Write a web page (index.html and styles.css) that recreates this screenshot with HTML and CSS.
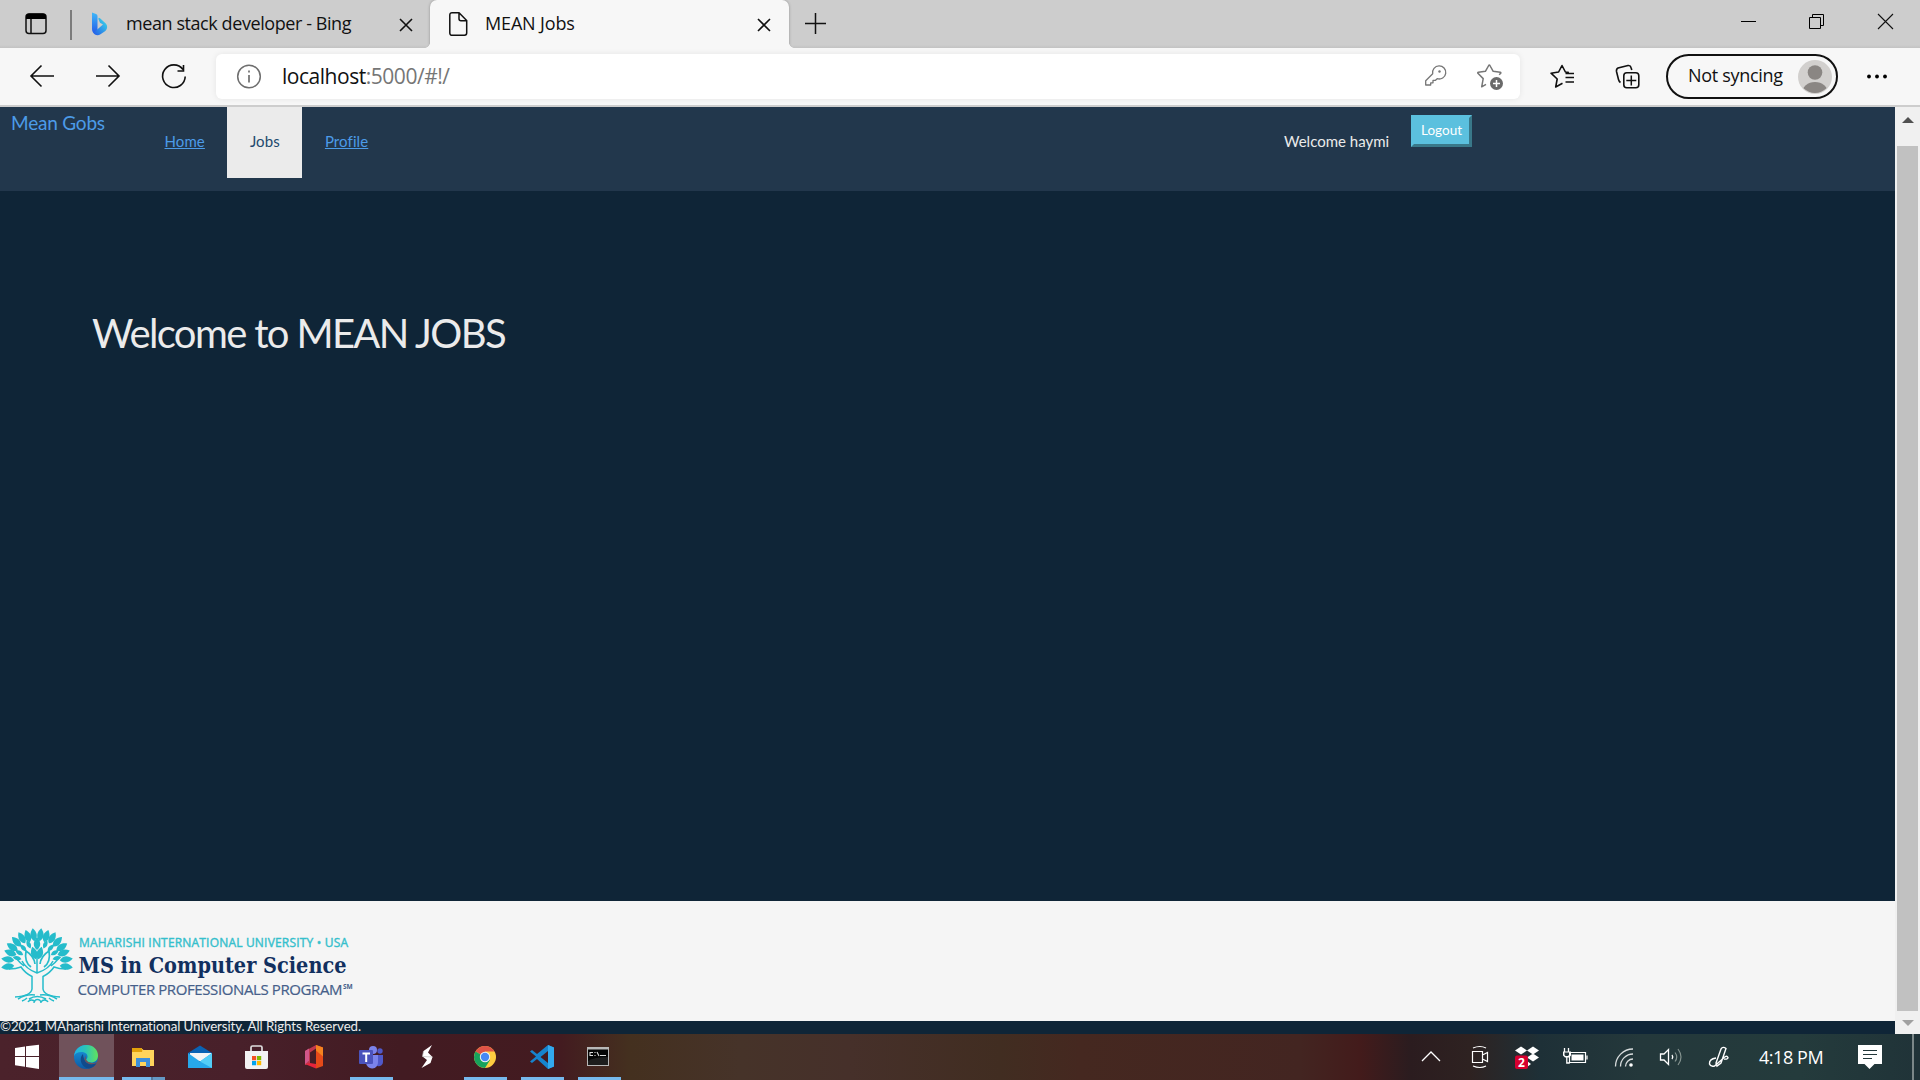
FILE: index.html
```html
<!DOCTYPE html>
<html lang="en">
<head>
<meta charset="utf-8">
<title>MEAN Jobs</title>
<link rel="stylesheet" href="styles.css">
</head>
<body>
<div class="tabstrip">
  <svg class="ic" width="70" height="48" viewBox="0 0 70 48"><rect x="26" y="14" width="20" height="19.500" rx="3" fill="none" stroke="#111" stroke-width="1.500"/><path d="M26 19v-2a3.500 3.500 0 0 1 3.500-3.500h13a3.500 3.500 0 0 1 3.500 3.500v2z" fill="#000"/><path d="M31 19v14.500" stroke="#111" stroke-width="1.500"/></svg>
  <div class="strip-sep"></div>
  <div class="tab">
    <svg class="ic" width="54" height="48" viewBox="72 0 54 48"><defs><linearGradient id="b1" x2="0" y2="1"><stop stop-color="#3fb8f8"/><stop offset="1" stop-color="#2458e8"/></linearGradient><linearGradient id="b2" x1="0" y1="1" x2="1" y2="0"><stop stop-color="#2458e8"/><stop offset="1" stop-color="#3be0e8"/></linearGradient></defs><path d="M92 12.500l4 1.500q1.500.6 1.500 2v14.500l-2 3.500q-3.500-1-3.500-5z" fill="url(#b1)"/><path d="M93 32c1.500 3.500 5 4 7.500 2.200l4.500-3c2.500-2 3-5.500.5-8l-5.500-5q-2-1-1.500 1l1.500 3.500 3 1.800-7.500 6.500q-2 1.500-2.500 1z" fill="url(#b2)"/></svg>
    <span class="tab-title">mean stack developer - Bing</span>
    <svg class="ic tab-close" width="54" height="48" viewBox="376 0 54 48"><path d="M400 19l12 12M412 19l-12 12" stroke="#111" stroke-width="1.600"/></svg>
  </div>
  <div class="tab active">
    <svg class="ic" width="55" height="48" viewBox="430 0 55 48"><path d="M459 12.700h-7a2.200 2.200 0 0 0-2.200 2.200v18.200a2.200 2.200 0 0 0 2.200 2.200h12.500a2.200 2.200 0 0 0 2.200-2.200v-12.500zM459 12.700v6a2 2 0 0 0 2 2h5.700" fill="none" stroke="#111" stroke-width="1.500"/></svg>
    <span class="tab-title">MEAN Jobs</span>
    <svg class="ic tab-close" width="50" height="48" viewBox="739 0 50 48"><path d="M758 19l12 12M770 19l-12 12" stroke="#111" stroke-width="1.600"/></svg>
  </div>
  <svg class="ic" width="52" height="48" viewBox="789 0 52 48"><path d="M805 23.500h21M815.500 13v21" stroke="#111" stroke-width="1.500"/></svg>
  <svg class="ic window-controls" width="206" height="48" viewBox="1714 0 206 48"><path d="M1741 21.500h15M1809.500 17.500h11v11h-11zM1812.500 17v-2.500h11v11h-2.500" fill="none" stroke="#000"/><path d="M1878 14l15 15M1893 14l-15 15" stroke="#111" stroke-width="1.100"/></svg>
</div>

<div class="toolbar">
  <svg class="ic" width="66" height="57" viewBox="9 48 66 57"><path d="M54 76H31M41.500 65.500L31 76l10.500 10.500" fill="none" stroke="#111" stroke-width="1.600"/></svg>
  <svg class="ic" width="66" height="57" viewBox="75 48 66 57"><path d="M96 76h23M108.500 65.500L119 76l-10.500 10.500" fill="none" stroke="#111" stroke-width="1.600"/></svg>
  <svg class="ic" width="66" height="57" viewBox="141 48 66 57"><path d="M185.200 76.500A11.300 11.300 0 1 1 183 69.500M183.500 65v6h-6" fill="none" stroke="#111" stroke-width="1.600"/></svg>
  <div class="address">
    <svg class="ic" width="66" height="45" viewBox="216 54 66 45"><circle cx="249" cy="76.500" r="11.300" fill="none" stroke="#6e6e6e" stroke-width="1.500"/><path d="M249 75v7.500M249 70.500v2" stroke="#6e6e6e" stroke-width="1.700"/></svg>
    <span class="url">localhost<span class="url-rest">:5000/#!/</span></span>
    <svg class="ic push" width="55" height="45" viewBox="1409 54 55 45"><path d="M1426.700 85.500v-4.300l7-7a6.600 6.600 0 1 1 4.500 5l-1.700 1.600h-2.500v2.500h-2.300v2.200h-5z" transform="translate(0 -.5)" fill="none" stroke="#767676" stroke-width="1.300" stroke-linejoin="round"/><circle cx="1440.500" cy="71.500" r="1.200" fill="#767676"/></svg>
    <svg class="ic" width="55" height="45" viewBox="1463 54 55 45"><path d="M1486 84.300l-4.300 2.500 1.500-8.200-5.300-5.300q-.5-.8.500-1l7-1 3.300-5.800q.6-1 1.200 0l3.300 5.800 7 1q1 .2.500 1l-1.500 1.500" fill="none" stroke="#767676" stroke-width="1.500" stroke-linejoin="round"/><circle cx="1496.500" cy="83.500" r="6.500" fill="#6a6a6a"/><path d="M1493 83.500h7M1496.500 80v7" stroke="#fff" stroke-width="1.500"/></svg>
  </div>
  <svg class="ic" width="66" height="57" viewBox="1529 48 66 57"><path d="M1562.500 83.300l-6.800 3.700 1.500-8-6.200-5.800 7.600-1.200 3.400-6.500 3.400 6.500 3.500.6M1565.500 73.500h8.500M1565.500 77.500h8.500M1565.500 82h8.500" fill="none" stroke="#111" stroke-width="1.600" stroke-linejoin="round"/></svg>
  <svg class="ic" width="66" height="57" viewBox="1595 48 66 57"><path d="M1620.500 82.500q-1.500-1-2-3l-2-8q-.4-2.500 1.500-3.500l10-2.500q2.500-.3 3 2l.8 2.500" fill="none" stroke="#111" stroke-width="1.600"/><rect x="1623.800" y="72.800" width="15" height="15" rx="3" fill="none" stroke="#111" stroke-width="1.600"/><path d="M1631.300 75.500v10M1626.300 80.500h10" stroke="#111" stroke-width="1.500"/></svg>
  <div class="profile">
    <span class="profile-label">Not syncing</span>
    <svg class="ic" width="34" height="34" viewBox="0 0 34 34"><defs><clipPath id="av"><circle cx="17" cy="17" r="16"/></clipPath></defs><circle cx="17" cy="17" r="17" fill="#d2d0ce"/><circle cx="17" cy="12.500" r="7.300" fill="#8a8683"/><ellipse cx="17" cy="33" rx="13" ry="11" fill="#8a8683" clip-path="url(#av)"/></svg>
  </div>
  <svg class="ic" width="66" height="57" viewBox="1845 48 66 57"><circle cx="1870" cy="76.500" r="1.900"/><circle cx="1878" cy="76.500" r="1.900"/><circle cx="1886" cy="76.500" r="1.900"/></svg>
</div>

<div class="viewport">
  <div class="page">
    <nav class="navbar">
      <a class="brand">Mean Gobs</a>
      <div class="menu"><a class="link">Home</a><a class="link current">Jobs</a><a class="link">Profile</a></div>
      <span class="greeting">Welcome haymi</span>
      <button class="logout">Logout</button>
    </nav>
    <main class="main"><h1 class="headline">Welcome to MEAN JOBS</h1></main>
    <footer class="footer">
      <svg class="ic" width="370" height="120" viewBox="0 901 370 120">
        <defs>
          <path id="lf" d="M0 0C-5-4-3.500-9 0-13C3.500-9 5-4 0 0z"/>
          <path id="sm" d="M0 0C-3-3-2.500-6 0-9C2.500-6 3-3 0 0z"/>
        </defs>
        <g transform="translate(0 922)" fill="#25bccb">
          <g transform="translate(37 41)">
            <use href="#lf" transform="rotate(-97) translate(0 -23)"/><use href="#lf" transform="rotate(-83) translate(0 -23)"/><use href="#lf" transform="rotate(-69) translate(0 -22)"/><use href="#lf" transform="rotate(-57) translate(0 -23)"/><use href="#lf" transform="rotate(-44) translate(0 -23)"/><use href="#lf" transform="rotate(-31) translate(0 -23)"/><use href="#lf" transform="rotate(-19) translate(0 -22)"/><use href="#lf" transform="rotate(-7) translate(0 -22)"/><use href="#lf" transform="rotate(7) translate(0 -22)"/><use href="#lf" transform="rotate(19) translate(0 -22)"/><use href="#lf" transform="rotate(31) translate(0 -23)"/><use href="#lf" transform="rotate(44) translate(0 -23)"/><use href="#lf" transform="rotate(57) translate(0 -23)"/><use href="#lf" transform="rotate(69) translate(0 -22)"/><use href="#lf" transform="rotate(83) translate(0 -23)"/><use href="#lf" transform="rotate(97) translate(0 -23)"/>
            <use href="#sm" transform="rotate(-76) translate(0 -16)"/><use href="#sm" transform="rotate(-60) translate(0 -16)"/><use href="#sm" transform="rotate(-42) translate(0 -16)"/><use href="#sm" transform="rotate(-24) translate(0 -16)"/><use href="#lf" transform="rotate(0) translate(0 -13)"/><use href="#sm" transform="rotate(24) translate(0 -16)"/><use href="#sm" transform="rotate(42) translate(0 -16)"/><use href="#sm" transform="rotate(60) translate(0 -16)"/><use href="#sm" transform="rotate(76) translate(0 -16)"/>
            <use href="#lf" transform="rotate(-16) translate(0 -4)"/><use href="#lf" transform="rotate(16) translate(0 -4)"/>
          </g>
          <g fill="none" stroke="#25bccb" stroke-width="1.500">
            <path d="M9 47q7 0 12-2 4 6 11 9.500V67q-1 7-17 8M66 47q-7 0-12-2-4 6-11 9.500V67q1 7 17 8"/>
            <path d="M22 39q4 8 15 12 12-4 16-12M37 35v16M16 36q4 5 8 8M59 36q-4 5-8 8"/>
            <path d="M31 45q-7-5-5-16 8 5 9 13M44 45q7-5 5-16-8 5-9 13" stroke-width="1.700"/>
            <path d="M18 77q8-5 17-4M57 77q-8-5-17-4M28 80a4 4 0 0 1 7 0M34 81a3.500 3.500 0 0 1 7 0M41 80a4 4 0 0 1 7 0M29 77q8-5 17 0M22 79q3-1 5-3M54 79q-3-1-5-3"/>
          </g>
        </g>
        <text class="mark-top" x="79" y="947" textLength="269">MAHARISHI INTERNATIONAL UNIVERSITY • USA</text>
        <text class="mark-mid" x="78.500" y="972.500" textLength="268" lengthAdjust="spacingAndGlyphs">MS in Computer Science</text>
        <text class="mark-bottom" x="77.500" y="994.500" textLength="265">COMPUTER PROFESSIONALS PROGRAM</text>
        <text class="mark-sm" x="343" y="989">SM</text>
      </svg>
    </footer>
    <p class="copyright">©2021 MAharishi International University. All Rights Reserved.</p>
  </div>
  <div class="scrollbar">
    <div class="arrow-up"></div><div class="thumb"></div><div class="arrow-down"></div>
  </div>
</div>

<div class="taskbar">
  <svg class="task" width="58" height="46" viewBox="0 1034 58 46"><path d="M15 1048l10-1.500v9.500h-10zM26 1046.300l13-1.500v11.200h-13zM15 1057h10v9.700l-10-1.500zM26 1057h13v12l-13-2z" fill="#fff"/></svg>
  <div class="task-slot focused"><svg class="task" width="57" height="46" viewBox="58 1034 57 46"><defs><linearGradient id="e1" x2="1"><stop stop-color="#1fb0e6"/><stop offset=".5" stop-color="#2cc6b6"/><stop offset="1" stop-color="#63e35a"/></linearGradient><linearGradient id="e2" x2="0" y2="1"><stop stop-color="#1b9ce0"/><stop offset="1" stop-color="#0c59a4"/></linearGradient></defs><circle cx="86" cy="1057" r="12" fill="url(#e2)"/><path d="M74 1056c1-7 6-11 12.500-11 7 0 11.500 5 11.500 10.500 0 4.500-3 7-7 7-3 0-5-1-5-2.500 0-1 1.500-1.500 1.500-3.500 0-3-3-4.500-6-4.500-3.500 0-6.500 1.500-7.500 4z" fill="url(#e1)"/><path d="M83 1054c-5 5-1 14 6 14.500 3.500-.5 6-2.500 7.500-5.500-6 3-13 .5-13.500-9z" fill="#114a8b"/><path d="M86 1055.500c-1.500 5 3 8 8 7.600q2-.3 4.500-1.800l-2 1.700c-6 3-12 .5-12-5z" fill="#70525b"/></svg></div>
  <div class="task-slot running split"><svg class="task" width="57" height="46" viewBox="115 1034 57 46"><path d="M132 1048h9l2 2h-11z" fill="#e09c00"/><path d="M132 1048h9l2.500 2h10.500v16h-22z" fill="#ffd45c"/><path d="M132 1048h9q2 1 1 4h-10z" fill="#e3a10a"/><path d="M136 1058h14v9h-4v-5h-6v5h-4z" fill="#3d8fdb"/></svg></div>
  <svg class="task" width="57" height="46" viewBox="172 1034 57 46"><path d="M188 1053l12-7.500 12 7.500v5h-24z" fill="#0a63b4"/><path d="M190 1053h21v8h-21z" fill="#f5f5f5"/><path d="M188 1053l12 8.500 12-8.500v15h-24z" fill="#27a8ea"/><path d="M212 1053v15l-12-6.500z" fill="#53cdf6"/></svg>
  <svg class="task" width="57" height="46" viewBox="229 1034 57 46"><path d="M251 1052v-4.500q0-1.500 1.500-1.500h8q1.500 0 1.500 1.500v4.500" fill="none" stroke="#ddd" stroke-width="1.700"/><path d="M245 1051h23v16q0 2-2 2h-19q-2 0-2-2z" fill="#f2f2f2"/><path d="M252 1056h4.200v4.200h-4.200z" fill="#f25022"/><path d="M257 1056h4.200v4.200h-4.200z" fill="#7fba00"/><path d="M252 1061h4.200v4.200h-4.200z" fill="#00a4ef"/><path d="M257 1061h4.200v4.200h-4.200z" fill="#ffb900"/></svg>
  <svg class="task" width="57" height="46" viewBox="286 1034 57 46"><path d="M305 1051l11-6v3.500l-6 4v11l-5 1.500z" fill="#c1384f"/><path d="M305 1051l4-2.500v12l-4 4z" fill="#d1578a"/><path d="M305 1064l5-1 6 1v4.500z" fill="#e8243c"/><path d="M316 1045l7 2.500v18.500l-7 2.500z" fill="#e64a19"/><path d="M316 1045l7 2.500v9l-7-6z" fill="#f58220"/></svg>
  <div class="task-slot running"><svg class="task" width="57" height="46" viewBox="343 1034 57 46"><circle cx="373" cy="1050" r="4" fill="#7b83eb"/><circle cx="380" cy="1051" r="2.700" fill="#5059c9"/><path d="M375 1055h8v7a4.500 4.500 0 0 1-8 2.500z" fill="#5059c9"/><path d="M366 1055h12v7a6 6 0 0 1-12 1z" fill="#7b83eb"/><rect x="359" y="1050" width="14" height="14" rx="1" fill="#4b53bc"/><path d="M362.500 1053.500h7.500M366.200 1053v9" stroke="#fff" stroke-width="2"/></svg></div>
  <svg class="task" width="57" height="46" viewBox="400 1034 57 46"><path d="M432 1045l-8.500 6-1 5.500 4.500 3.500-5.500 8 9-5 2-6-4.500-4.500z" fill="#fff"/><path d="M423.500 1051l-1 5.500 10 .5" fill="none" stroke="#bbb" stroke-width=".7"/></svg>
  <div class="task-slot running"><svg class="task" width="57" height="46" viewBox="457 1034 57 46"><circle cx="485" cy="1057" r="11" fill="#ffcd40"/><path d="M485 1057L475.500 1051.500A11 11 0 0 1 494.500 1051.500H485z" fill="#de5347"/><path d="M475.500 1051.500A11 11 0 0 0 485 1068L490 1060z" fill="#17a25c"/><circle cx="485" cy="1057" r="5.200" fill="#f3f3f3"/><circle cx="485" cy="1057" r="4.200" fill="#4688f4"/></svg></div>
  <div class="task-slot running"><svg class="task" width="57" height="46" viewBox="514 1034 57 46"><path d="M548 1045l6 2.500v19l-6 2.500-11-10-5 4-2-1.500 6-5-6-5 2-1.500 5 4zM548 1051l-7.500 6 7.500 6z" fill="#1684ce" fill-rule="evenodd"/><path d="M548 1045l6 2.500v19l-6 2.500z" fill="#32a9ee"/></svg></div>
  <div class="task-slot running"><svg class="task" width="57" height="46" viewBox="571 1034 57 46"><rect x="587" y="1047" width="22" height="19" fill="#b8b8b8"/><rect x="588" y="1049.500" width="20" height="15.500" fill="#050505"/><path d="M590 1052.500h3M590 1052v3.500h3M595 1052v1M595 1055v1M597 1052l2 4M600 1055.500h6" stroke="#ddd" stroke-width="1.100" fill="none"/><path d="M588 1061q6-4 20-4v8h-20z" fill="#1d1d1d"/></svg></div>
  <div class="tray">
    <svg class="task" width="48" height="46" viewBox="1407 1034 48 46"><path d="M1422 1061l9-9 9 9" fill="none" stroke="#fff" stroke-width="1.300"/></svg>
    <svg class="task" width="48" height="46" viewBox="1455 1034 48 46"><path d="M1472.500 1051.500h10v11h-10zM1482.500 1055l5-2.500v9l-5-2.500M1473 1048q7-3 13 0M1473 1066q7 3 13 0" fill="none" stroke="#fff" stroke-width="1.200"/></svg>
    <svg class="task" width="48" height="46" viewBox="1503 1034 48 46"><path d="M1521 1046.500l6 4-6 4-6-4zM1533 1046.500l6 4-6 4-6-4zM1533 1053.500l6 4-6 4-6-4zM1527 1061l4 3-4 3z" fill="#fff"/><rect x="1515" y="1055.500" width="13" height="13.500" rx="2" fill="#d6002f"/><text class="badge" x="1521.500" y="1066.500">2</text></svg>
    <svg class="task" width="48" height="46" viewBox="1551 1034 48 46"><path d="M1569.500 1052.500h16v10h-16zM1587 1055.500v4" fill="none" stroke="#fff" stroke-width="1.200"/><path d="M1571.500 1054.500h12v6h-12zM1563 1051.500h8v4l-2 2h-4l-2-2z" fill="#fff"/><path d="M1564.500 1048v4M1568.500 1048v4M1566.800 1057v6h3" fill="none" stroke="#fff" stroke-width="1.300"/><path d="M1564.500 1052.500h4.500v2.500l-1 1h-2.500l-1-1z" fill="#24353a"/></svg>
    <svg class="task" width="48" height="46" viewBox="1599 1034 48 46"><path d="M1615.500 1066.500a17.500 17.500 0 0 1 17.500-17.500M1620.500 1066.500a12.500 12.500 0 0 1 12.500-12.500M1625.500 1066.500a7.500 7.500 0 0 1 7.500-7.500" fill="none" stroke="#d8dcdd" stroke-width="1.300"/><circle cx="1631" cy="1065" r="1.800" fill="#fff"/></svg>
    <svg class="task" width="48" height="46" viewBox="1647 1034 48 46"><path d="M1660.500 1054h3.500l4.500-4.500v15l-4.500-4.500h-3.500zM1672 1055q1.500 2 0 4" fill="none" stroke="#fff" stroke-width="1.300"/><path d="M1675 1052.500q3.500 4.500 0 9M1678 1049q6 8 0 16" fill="none" stroke="#84928f" stroke-width="1.200"/></svg>
    <svg class="task" width="48" height="46" viewBox="1695 1034 48 46"><path d="M1716 1063l5-14q2-3 5-.5l-5 14.500-4 3zM1716 1058q-7 1-6.500 6 1 3 5 2l8-7q4-4.500 5.500-1.500 0 2-4 1.500" fill="none" stroke="#fff" stroke-width="1.400"/></svg>
    <span class="clock">4:18 PM</span>
    <svg class="task" width="60" height="46" viewBox="1844 1034 60 46"><path d="M1858 1045h24v19h-7.500l-5 5-5-5h-6.500z" fill="#fff"/><path d="M1863 1050.500h14M1863 1054.500h14M1863 1058.500h9" stroke="#22373a" stroke-width="1"/></svg>
    <div class="show-desktop"></div>
  </div>
</div>
</body>
</html>
```
FILE: styles.css
```css
* { box-sizing: border-box; }
body { margin: 0; width: 1920px; height: 1080px; overflow: hidden; display: flex; flex-direction: column; font-family: "Open Sans", "Noto Sans", sans-serif; color: #111; }
.ic, .task { display: block; flex: none; }

.tabstrip { height: 48px; display: flex; align-items: flex-start; background: linear-gradient(#cdcdcd 45px, #c2c2c2 48px); }
.strip-sep { width: 2px; height: 30px; margin-top: 10px; background: #7c7c7c; }
.tab { display: flex; align-items: center; width: 358px; height: 48px; position: relative; }
.tab-title { font-size: 18px; line-height: 47px; height: 48px; white-space: nowrap; letter-spacing: -0.42px; }
.tab-close { margin-left: auto; }
.active { width: 359px; background: #f7f7f7; border-radius: 7px 7px 0 0; box-shadow: 0 0 3px rgba(0, 0, 0, .3); }
.active .tab-title { letter-spacing: -0.15px; }
.active::before, .active::after { content: ""; position: absolute; bottom: 0; width: 5px; height: 5px; }
.active::before { left: -5px; background: radial-gradient(circle at 0 0, transparent 4.5px, #f7f7f7 5px); }
.active::after { right: -5px; background: radial-gradient(circle at 100% 0, transparent 4.5px, #f7f7f7 5px); }
.window-controls { margin-left: auto; }

.toolbar { height: 59px; display: flex; align-items: flex-start; padding-left: 9px; background: #f7f7f7; border-bottom: 2px solid #cdcdcd; position: relative; }
.address { width: 1304px; height: 45px; margin: 6px 9px 0; display: flex; align-items: center; padding-right: 2px; background: #fff; border-radius: 6px; box-shadow: 0 0 6px rgba(0, 0, 0, .08); }
.url { font-size: 21px; line-height: 45px; letter-spacing: -0.47px; }
.url-rest { color: #767676; }
.push { margin-left: auto; }
.profile { width: 172px; height: 45px; margin: 6px 6px 0 5px; display: flex; align-items: center; justify-content: space-between; padding: 0 4px 0 20px; border: 2px solid #111; border-radius: 23px; }
.profile-label { font-size: 18px; line-height: 39px; height: 41px; letter-spacing: -0.3px; }

.viewport { height: 927px; display: flex; font-family: Lato, sans-serif; }
.page { width: 1895px; background: #0f2537; color: #ebebeb; display: flex; flex-direction: column; overflow: hidden; }
.navbar { height: 84px; display: flex; align-items: flex-start; background: #22374c; }
.brand { width: 142px; padding: 3px 0 0 11px; font-size: 19px; line-height: 25px; color: #4c9be8; letter-spacing: -0.2px; }
.menu { width: 1142px; display: flex; }
.link { height: 71px; padding: 0 22.5px; font-size: 15px; line-height: 68px; color: #4c9be8; text-decoration: underline; letter-spacing: 0.1px; }
.link.current { width: 75px; background: #ebebeb; color: #22496e; text-decoration: none; }
.greeting { width: 127px; font-size: 15px; line-height: 68px; }
.logout { width: 61px; height: 32px; margin: 8px 0 0; padding: 0 0 2px; border: 3px solid; border-color: #5bc0de #397889 #397889 #5bc0de; background: #5bc0de; color: #fff; font: 13.5px/24px Lato, sans-serif; }
.main { flex: 1; padding: 118px 92px; }
.headline { margin: 0; font-size: 40px; font-weight: 400; line-height: 48px; letter-spacing: -1.65px; }
.footer { height: 120px; background: #f5f5f5; }
.mark-top { font: 12px "Open Sans", sans-serif; fill: #35bfcc; stroke: #35bfcc; stroke-width: .4; }
.mark-mid { font: bold 22.5px "DejaVu Serif Condensed", "DejaVu Serif", serif; fill: #12305f; }
.mark-bottom { font: 15px "Open Sans", sans-serif; fill: #465f8a; stroke: #465f8a; stroke-width: .2; }
.mark-sm { font: bold 6.5px "Open Sans", sans-serif; fill: #465f8a; }
.copyright { margin: 0; height: 13px; font-size: 13.3px; line-height: 10px; letter-spacing: -0.08px; white-space: nowrap; }

.scrollbar { width: 25px; background: #f0f0f0; display: flex; flex-direction: column; align-items: center; }
.arrow-up { margin-top: 10px; border: 6px solid transparent; border-top: 0; border-bottom-color: #505050; }
.thumb { width: 21px; height: 865px; margin-top: 23px; background: #c1c1c1; }
.arrow-down { margin-top: 9px; border: 6px solid transparent; border-bottom: 0; border-top-color: #a0a0a0; }

.taskbar { height: 46px; display: flex; background: linear-gradient(90deg, #4b222b 0, #48202a 240px, #421b22 400px, #431b20 560px, #44301f 630px, #463329 740px, #46302a 850px, #412d21 1000px, #452820 1080px, #432521 1300px, #431b1b 1360px, #2b1c1f 1410px, #2e2221 1470px, #1e3037 1540px, #24383b 1640px, #243b3c 1800px, #203338 1920px); }
.task-slot { width: 57px; position: relative; }
.focused { background: linear-gradient(90deg, transparent 1px, #70525b 1px, #70525b 56px, transparent 56px); }
.focused::after, .running::after { content: ""; position: absolute; bottom: 0; left: 7px; width: 43px; height: 3px; background: #76b9ed; }
.focused::after { left: 1px; width: 55px; }
.split::after { background: linear-gradient(90deg, #76b9ed 29px, #54789c 29px, #54789c 31px, #6498c4 31px); }
.tray { margin-left: auto; display: flex; }
.clock { width: 101px; padding-left: 16px; font-size: 18px; line-height: 46px; color: #fff; letter-spacing: -0.45px; white-space: nowrap; }
.badge { font: bold 12px "Open Sans", sans-serif; fill: #fff; text-anchor: middle; }
.show-desktop { width: 16px; background: linear-gradient(90deg, transparent 8px, #7b8788 8px, #7b8788 10px, transparent 10px); }
```
